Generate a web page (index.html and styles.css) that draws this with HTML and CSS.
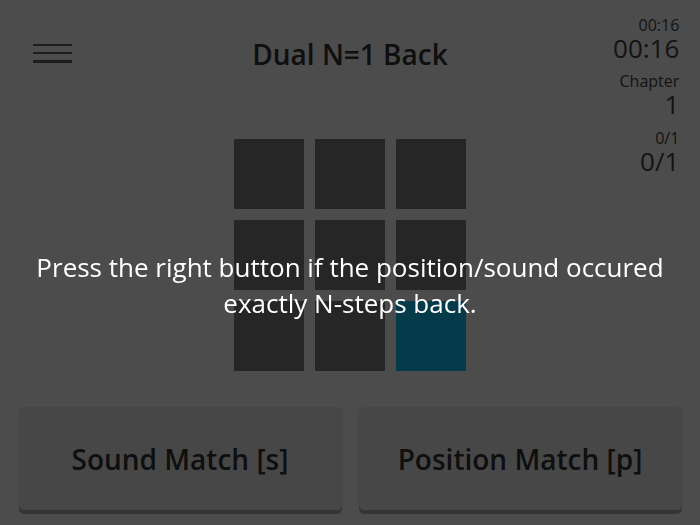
FILE: index.html
```html
<!DOCTYPE html>
<html lang="en">
<head>
<meta charset="utf-8">
<title>Dual N-Back</title>
<link rel="stylesheet" href="styles.css">
</head>
<body>
<div class="app">
  <header class="header">
    <button class="menu" aria-label="Menu">
      <span class="menu-line"></span>
      <span class="menu-line"></span>
      <span class="menu-line"></span>
    </button>
    <h1 class="title">Dual N=1 Back</h1>
    <div class="spacer"></div>
  </header>

  <aside class="stats">
    <div class="stat">
      <div class="stat-label">00:16</div>
      <div class="stat-value">00:16</div>
    </div>
    <div class="stat">
      <div class="stat-label">Chapter</div>
      <div class="stat-value">1</div>
    </div>
    <div class="stat">
      <div class="stat-label">0/1</div>
      <div class="stat-value">0/1</div>
    </div>
  </aside>

  <main class="board">
    <div class="cell"></div>
    <div class="cell"></div>
    <div class="cell"></div>
    <div class="cell"></div>
    <div class="cell"></div>
    <div class="cell"></div>
    <div class="cell"></div>
    <div class="cell"></div>
    <div class="cell cell-active"></div>
  </main>

  <footer class="controls">
    <button class="match-btn">Sound Match [s]</button>
    <button class="match-btn">Position Match [p]</button>
  </footer>
</div>

<div class="overlay">
  <p class="overlay-text">Press the right button if the position/sound occured exactly N-steps back.</p>
</div>
</body>
</html>
```

FILE: styles.css
```css
* {
  box-sizing: border-box;
}

html, body {
  margin: 0;
  padding: 0;
  height: 100%;
}

body {
  background: #ffffff;
  font-family: "Open Sans", "Noto Sans", sans-serif;
  color: #333333;
  overflow: hidden;
}

.app {
  position: relative;
  height: 100vh;
  display: flex;
  flex-direction: column;
}

.header {
  height: 107px;
  display: grid;
  grid-template-columns: 1fr auto 1fr;
  align-items: center;
  padding: 0 33px;
}

.menu {
  width: 39px;
  height: 19px;
  padding: 0;
  border: 0;
  background: none;
  display: flex;
  flex-direction: column;
  justify-content: space-between;
  margin-top: -1px;
}

.menu-line {
  display: block;
  height: 2.5px;
  background: #626262;
}

.title {
  margin: 0;
  font-size: 28px;
  font-weight: 600;
  color: #333333;
}

.stats {
  position: absolute;
  top: 15.5px;
  right: 20.7px;
  display: flex;
  flex-direction: column;
  gap: 10.7px;
  text-align: right;
  color: #444444;
}

.stat-label {
  font-size: 16px;
  line-height: 18px;
}

.stat-value {
  font-size: 26px;
  line-height: 28px;
}

.board {
  margin: 32.3px auto 0;
  display: grid;
  grid-template-columns: repeat(3, 70px);
  grid-template-rows: repeat(3, 70px);
  gap: 10.65px;
}

.cell {
  background: #808080;
}

.cell-active {
  background: #10c3f6;
}

.controls {
  margin-top: 37px;
  padding: 0 18.5px;
  display: flex;
  gap: 17px;
}

.match-btn {
  flex: 1;
  height: 102px;
  border: 0;
  border-radius: 5px;
  background: #efefef;
  box-shadow: 0 4px 0 #b2b2b2, 0 0 2px rgba(0, 0, 0, 0.25);
  font-family: "Open Sans", "Noto Sans", sans-serif;
  font-size: 28px;
  font-weight: 600;
  color: #333333;
  padding: 0;
}

.overlay {
  position: fixed;
  inset: 0;
  background: rgba(0, 0, 0, 0.7);
  padding: 0 16px;
}

.overlay-text {
  margin: 249px 0 0;
  font-size: 26px;
  line-height: 36px;
  color: #ffffff;
  text-align: center;
}
```
